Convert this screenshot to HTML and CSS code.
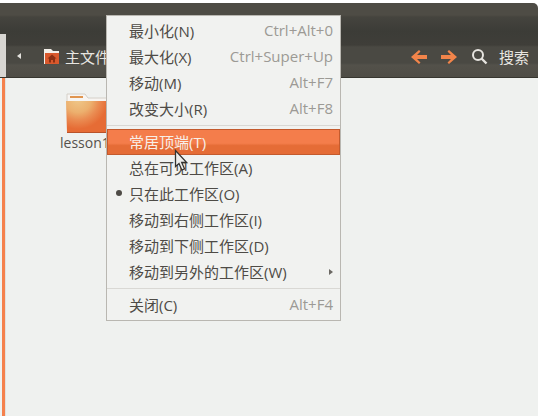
FILE: index.html
```html
<!DOCTYPE html>
<html lang="zh-CN">

<head>
    <meta charset="UTF-8">
    <meta name="viewport" content="width=device-width, initial-scale=1.0">
    <title>主文件夹</title>
    <link rel="stylesheet" href="styles.css">
</head>

<body>

    <div class="window">
        <header class="toolbar">
            <span class="backTriangle"></span>
            <svg class="homeIcon" width="17" height="17" viewBox="0 0 17 17">
                <path d="M1 1h7l2 2h6v13H1z" fill="#f3efe9" />
                <path d="M2 5h14v11H2z" fill="#d9582c" />
                <path d="M9 6.500l4.500 4h-1.500v4h-2v-2.500h-2v2.500h-2v-4h-1.500z" fill="#8c2f12" />
            </svg>
            <span class="pathLabel">主文件夹</span>
            <div class="toolbarRight">
                <svg class="navArrow" width="18" height="16" viewBox="0 0 18 16">
                    <path d="M9 1L1 8l8 7 1.500-1.500L7 10h10V6H7l3.500-3.500z" fill="#f2844a" />
                </svg>
                <svg class="navArrow" width="18" height="16" viewBox="0 0 18 16">
                    <path d="M9 1l8 7-8 7-1.500-1.500L11 10H1V6h10L7.500 2.500z" fill="#f2844a" />
                </svg>
                <svg class="searchIcon" width="17" height="17" viewBox="0 0 17 17">
                    <circle cx="7" cy="7" r="5" fill="none" stroke="#e6e4df" stroke-width="2" />
                    <path d="M10.500 10.500L15.500 15.500" stroke="#e6e4df" stroke-width="2.400" />
                </svg>
                <span class="searchLabel">搜索</span>
            </div>
        </header>

        <div class="content">
            <div class="sidebarEdge"></div>
            <div class="fileItem">
                <svg class="folderIcon" width="42" height="40" viewBox="0 0 42 40">
                    <defs>
                        <radialGradient id="folderGlow" gradientUnits="userSpaceOnUse" cx="12" cy="6" r="30">
                            <stop offset="0" stop-color="#efc88a" />
                            <stop offset="0.45" stop-color="#ecb06e" />
                            <stop offset="0.7" stop-color="#ea8c52" />
                            <stop offset="1" stop-color="#e66c35" />
                        </radialGradient>
                    </defs>
                    <path d="M1 1h18l3 4h20v12H1z" fill="#f7f5f2" stroke="#d5d0c8" />
                    <path d="M4 3h13v2H4z" fill="#e0954f" />
                    <path d="M0 8h42v31H1z" fill="url(#folderGlow)" />
                    <path d="M1 39h41v1H1z" fill="#b9532a" />
                </svg>
                <span class="fileName">lesson1</span>
            </div>
        </div>
    </div>

    <ul class="windowMenu">
        <li class="menuItem"><span>最小化(N)</span><span class="shortcut">Ctrl+Alt+0</span></li>
        <li class="menuItem"><span>最大化(X)</span><span class="shortcut">Ctrl+Super+Up</span></li>
        <li class="menuItem"><span>移动(M)</span><span class="shortcut">Alt+F7</span></li>
        <li class="menuItem"><span>改变大小(R)</span><span class="shortcut">Alt+F8</span></li>
        <li class="menuSeparator"></li>
        <li class="menuItem menuItemActive"><span>常居顶端(T)</span></li>
        <li class="menuItem"><span>总在可见工作区(A)</span></li>
        <li class="menuItem menuItemChecked"><span>只在此工作区(O)</span></li>
        <li class="menuItem"><span>移动到右侧工作区(I)</span></li>
        <li class="menuItem"><span>移动到下侧工作区(D)</span></li>
        <li class="menuItem"><span>移动到另外的工作区(W)</span><span class="submenuArrow"></span></li>
        <li class="menuSeparator"></li>
        <li class="menuItem"><span>关闭(C)</span><span class="shortcut">Alt+F4</span></li>
    </ul>

    <svg class="cursor" width="15" height="23" viewBox="0 0 15 23">
        <path d="M1.500 1.500v16l3.500-3 2.800 6.500 2.700-1.200-2.800-6.300h5z" fill="#eeeeec" stroke="#34322f" stroke-width="1.300" />
    </svg>

</body>

</html>
```

FILE: styles.css
```css
body {
    font-family: "Open Sans", "Noto Sans CJK SC", sans-serif;
    margin: 0;
    padding: 0;
    width: 538px;
    height: 416px;
    overflow: hidden;
    background-color: #ffffff;
}

.window {
    height: 413px;
    margin-top: 3px;
    display: flex;
    flex-direction: column;
}

.toolbar {
    height: 75px;
    box-sizing: border-box;
    padding: 45px 9px 0 17px;
    display: flex;
    align-items: flex-start;
    border-top-right-radius: 5px;
    border-bottom: 1px solid #37362f;
    background:
        linear-gradient(#d8d6d2, #d8d6d2) 0 31px / 6px 44px no-repeat,
        linear-gradient(to bottom, #4e4c45 0, #4e4c45 12px, #45443e 14px, #3c3c37 28px, #3f3e39 42px, #4a4943 44px, #4a4943 60px, #53514a 62px, #4f4d46 74px);
}

.backTriangle {
    width: 0;
    height: 0;
    margin: 5px 0 0 0;
    border-top: 3px solid transparent;
    border-bottom: 3px solid transparent;
    border-right: 4px solid #e4e2dd;
}

.homeIcon {
    margin-left: 22px;
}

.pathLabel {
    margin-left: 5px;
    color: #e8e6e1;
    font-size: 15px;
    line-height: 18px;
}

.toolbarRight {
    margin-left: auto;
    display: flex;
    align-items: center;
    height: 17px;
}

.navArrow {
    margin-right: 12px;
}

.searchIcon {
    margin-left: 1px;
}

.searchLabel {
    margin-left: 11px;
    color: #e8e6e1;
    font-size: 15px;
}

.content {
    flex: 1;
    display: flex;
    background-color: #eff1ef;
}

.sidebarEdge {
    width: 3px;
    margin-left: 2px;
    background-color: #f5814c;
    border-right: 1px solid #e2e1dd;
}

.fileItem {
    margin: 15px 0 0 54px;
    display: flex;
    flex-direction: column;
    align-items: flex-start;
    width: 60px;
}

.folderIcon {
    margin-left: 6px;
}

.fileName {
    color: #55524c;
    font-size: 14px;
    line-height: 20px;
    white-space: nowrap;
}

.windowMenu {
    list-style-type: none;
    margin: 0;
    padding: 2px 0;
    position: absolute;
    left: 106px;
    top: 15px;
    width: 233px;
    background-color: #f1f2f0;
    border: 1px solid #b9b7b1;
}

.menuItem {
    height: 26px;
    box-sizing: border-box;
    padding: 0 7px 2px 22px;
    display: flex;
    justify-content: space-between;
    align-items: center;
    color: #4e4b46;
    font-size: 15px;
}

.shortcut {
    color: #9c9a95;
}

.menuSeparator {
    height: 1px;
    margin: 3px 0;
    background-color: #d9d8d4;
}

.menuItemActive {
    color: #f8efe8;
    padding-left: 21px;
    border: 1px solid #c45a2d;
    background: linear-gradient(to bottom, #f47d4b 0, #f47d4b 55%, #e56c36 65%, #e56c36 100%);
}

.menuItemChecked {
    position: relative;
}

.menuItemChecked::before {
    content: "";
    position: absolute;
    left: 9px;
    top: 9px;
    width: 6px;
    height: 6px;
    border-radius: 50%;
    background-color: #4e4b46;
}

.submenuArrow {
    width: 0;
    height: 0;
    margin-top: 2px;
    border-top: 3px solid transparent;
    border-bottom: 3px solid transparent;
    border-left: 4px solid #6b6863;
}

.cursor {
    position: absolute;
    left: 174px;
    top: 149px;
}
```
